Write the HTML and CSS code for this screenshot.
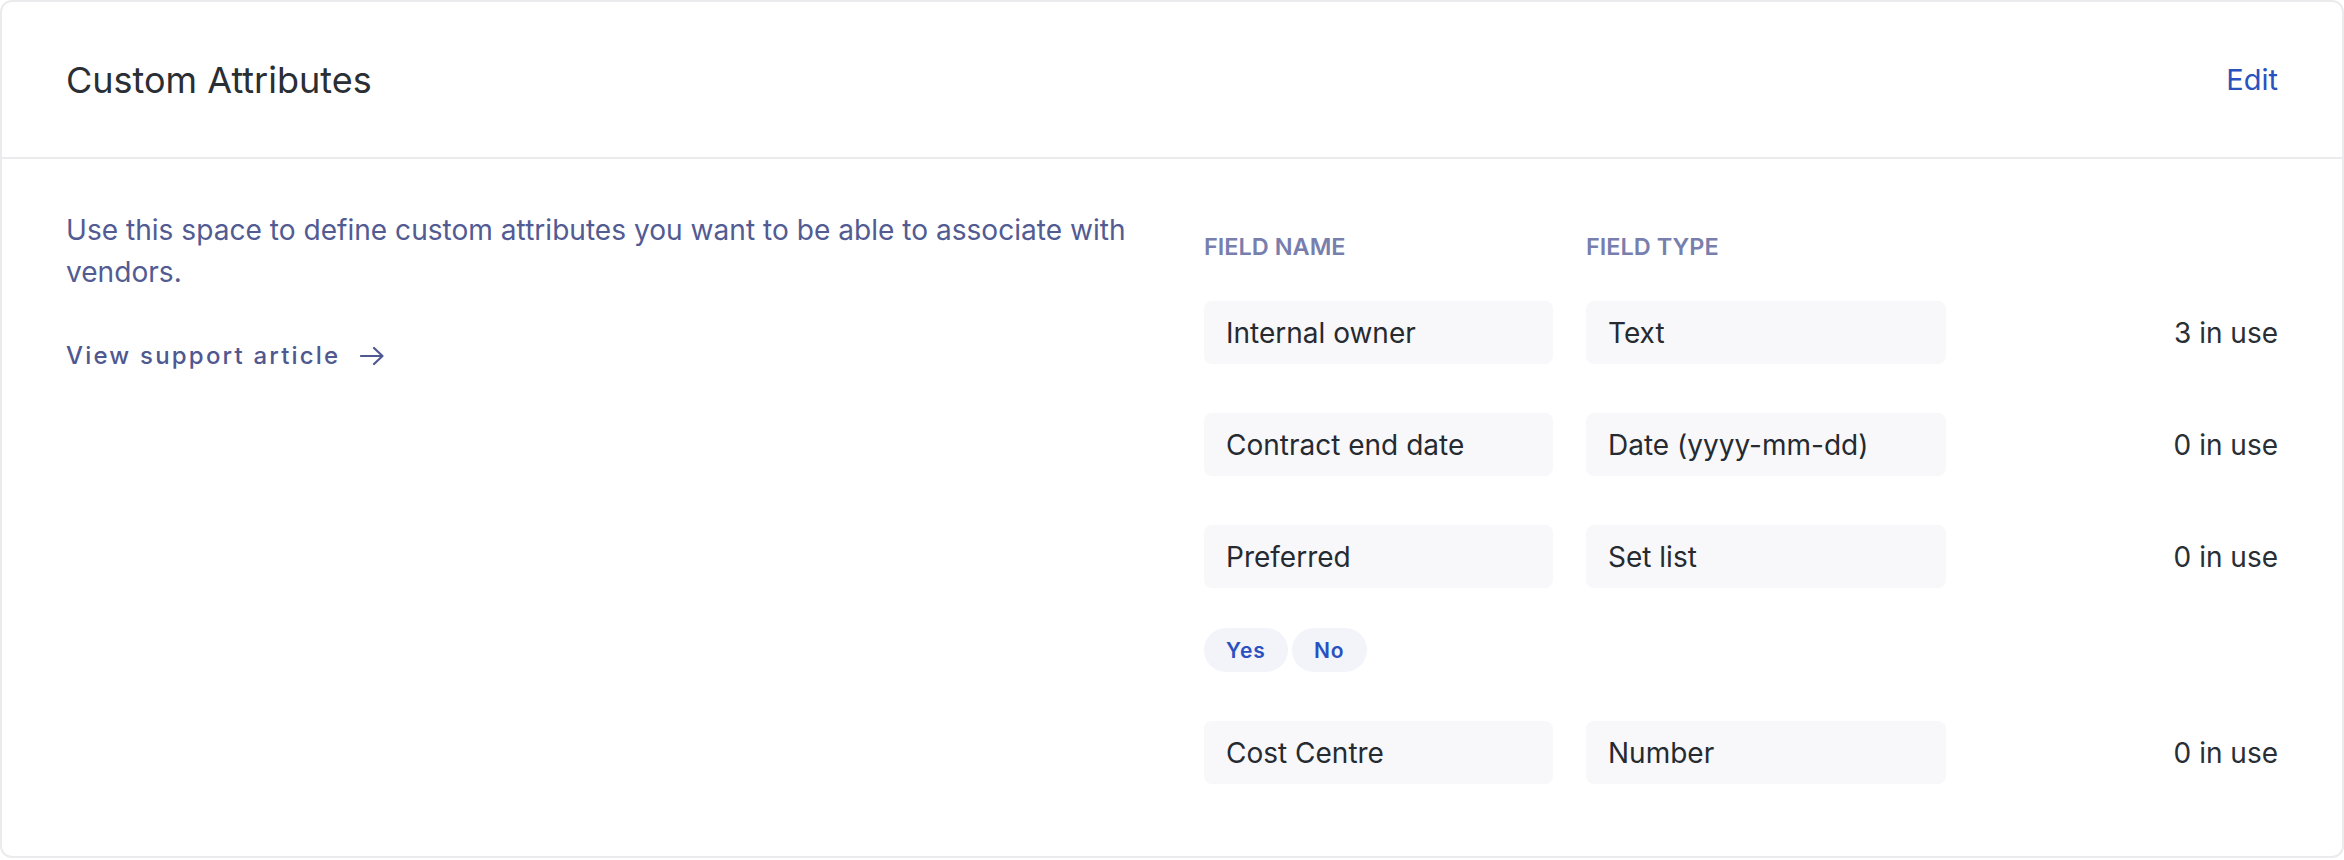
FILE: index.html
```html
<!DOCTYPE html>
<html lang="en">
<head>
<meta charset="utf-8">
<title>Custom Attributes</title>
<link rel="stylesheet" href="styles.css">
</head>
<body>
<section class="card">
  <header class="card-header">
    <h2 class="card-title">Custom Attributes</h2>
    <a class="edit-link" href="#">Edit</a>
  </header>
  <div class="card-body">
    <div class="intro">
      <p class="intro-text">Use this space to define custom attributes you want to be able to associate with vendors.</p>
      <a class="support-link" href="#">View support article
        <svg class="arrow" viewBox="0 0 24 20" width="24" height="20" aria-hidden="true"><path d="M1 10H22.5M14 2L22.5 10L14 18" fill="none" stroke="currentColor" stroke-width="2.2" stroke-linecap="round" stroke-linejoin="round"/></svg>
      </a>
    </div>
    <div class="fields">
      <div class="field-head">
        <span class="col-label">FIELD NAME</span>
        <span class="col-label">FIELD TYPE</span>
        <span></span>
      </div>
      <div class="field-rows">
        <div class="field-row">
          <div class="cell">Internal owner</div>
          <div class="cell">Text</div>
          <div class="usage">3 in use</div>
        </div>
        <div class="field-row">
          <div class="cell">Contract end date</div>
          <div class="cell">Date (yyyy-mm-dd)</div>
          <div class="usage">0 in use</div>
        </div>
        <div class="field-group">
          <div class="field-row">
            <div class="cell">Preferred</div>
            <div class="cell">Set list</div>
            <div class="usage">0 in use</div>
          </div>
          <div class="options">
            <span class="pill">Yes</span>
            <span class="pill">No</span>
          </div>
        </div>
        <div class="field-row">
          <div class="cell">Cost Centre</div>
          <div class="cell">Number</div>
          <div class="usage">0 in use</div>
        </div>
      </div>
    </div>
  </div>
</section>
</body>
</html>
```

FILE: styles.css
```css
* { box-sizing: border-box; }

html, body {
  margin: 0;
  padding: 0;
  background: #ffffff;
}

body {
  font-family: Inter, "Noto Sans", "Liberation Sans", sans-serif;
  color: #262a31;
}

.card {
  width: 2344px;
  border: 2px solid #ebebed;
  border-radius: 12px;
  background: #ffffff;
}

.card-header {
  height: 157px;
  padding: 0 64px;
  display: flex;
  align-items: center;
  justify-content: space-between;
  border-bottom: 2px solid #ebebed;
}

.card-title {
  margin: 0;
  font-size: 36px;
  font-weight: 400;
  line-height: 44px;
  color: #2a2e35;
}

.edit-link {
  font-size: 29px;
  line-height: 40px;
  color: #2a52be;
  text-decoration: none;
}

.card-body {
  padding: 50px 64px 72px;
  display: grid;
  grid-template-columns: 1fr 1fr;
  column-gap: 64px;
}

.intro-text {
  margin: 0;
  font-size: 28.1px;
  line-height: 42px;
  color: #525b92;
}

.support-link {
  margin-top: 45px;
  display: inline-flex;
  align-items: center;
  font-size: 24px;
  line-height: 36px;
  font-weight: 500;
  letter-spacing: 2.2px;
  color: #4f5890;
  text-decoration: none;
}

.arrow {
  margin-left: 20px;
  display: block;
}

.fields {
  padding-top: 20px;
}

.field-head,
.field-row {
  display: grid;
  grid-template-columns: 349px 360px 1fr;
  column-gap: 33px;
  align-items: center;
}

.field-head {
  margin-bottom: 36px;
}

.col-label {
  font-size: 23.5px;
  line-height: 36px;
  font-weight: 600;
  color: #787fae;
}

.field-rows {
  display: flex;
  flex-direction: column;
  gap: 49px;
}

.cell {
  height: 63px;
  padding: 0 22px;
  display: flex;
  align-items: center;
  background: #f8f8fa;
  border-radius: 8px;
  font-size: 28px;
  color: #262a31;
}

.usage {
  text-align: right;
  font-size: 28px;
  color: #2a2e35;
}

.options {
  margin-top: 40px;
  display: flex;
  gap: 4px;
}

.pill {
  height: 44px;
  padding: 0 22px;
  display: inline-flex;
  align-items: center;
  border-radius: 22px;
  background: #f3f4fa;
  font-size: 21px;
  font-weight: 600;
  letter-spacing: 1px;
  color: #2b50c0;
}
```
